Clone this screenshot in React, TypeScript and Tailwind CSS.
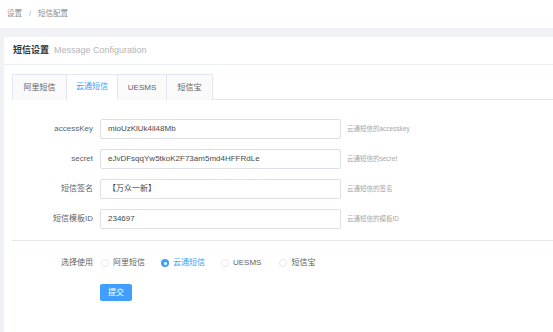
import React from "react";

const fields = [
  { label: "accessKey", value: "mioUzKlUk4il48Mb", hint: "云通短信的accesskey" },
  { label: "secret", value: "eJvDFsqqYw5tkoK2F73am5md4HFFRdLe", hint: "云通短信的secret" },
  { label: "短信签名", value: "【万众一新】", hint: "云通短信的签名" },
  { label: "短信模板ID", value: "234697", hint: "云通短信的模板ID" },
];

const tabs = [
  { name: "阿里短信", w: "w-[55px]" },
  { name: "云通短信", w: "w-[51px]", active: true },
  { name: "UESMS", w: "w-[49px]" },
  { name: "短信宝", w: "w-[46px]" },
];

const radios = [
  { name: "阿里短信", gap: "mr-[16px]" },
  { name: "云通短信", gap: "mr-[16px]", checked: true },
  { name: "UESMS", gap: "mr-[18px]" },
  { name: "短信宝", gap: "" },
];

export default function App() {
  return (
    <div
      className="w-[553px] h-[332px] overflow-hidden bg-[#f0f2f5] flex flex-col"
      style={{ fontFamily: '"Liberation Sans", "Noto Sans CJK SC", sans-serif' }}
    >
      {/* breadcrumb */}
      <div className="h-[28px] shrink-0 bg-white flex items-center pl-[7px] text-[7.5px] text-[#8c8c8c]">
        <span>设置</span>
        <span className="mx-[7px] text-[#aaa]">/</span>
        <span>短信配置</span>
      </div>

      <div className="ml-[4px] mt-[9px] flex-1 bg-white">
        {/* card header */}
        <div className="h-[28px] border-b border-[#ebeef5] flex items-center pl-[9px]">
          <span className="text-[9px] font-bold text-[#303133]">短信设置</span>
          <span className="ml-[5px] text-[9px] text-[#b4b4b4]">Message Configuration</span>
        </div>

        {/* tabs */}
        <div className="pl-[8px] pt-[9px]">
          <div className="flex border-b border-[#e4e7ed] h-[26px]">
            {tabs.map((t, i) => (
              <div
                key={t.name}
                className={
                  t.w +
                  " h-[26px] flex items-center justify-center text-[8px] border-t border-r border-[#e4e7ed] " +
                  (i === 0 ? "border-l " : "") +
                  (t.active ? "bg-white text-[#409eff] border-b border-b-white" : "bg-[#fafafa] text-[#606266]")
                }
              >
                {t.name}
              </div>
            ))}
          </div>
        </div>

        {/* form fields */}
        <div className="flex flex-col gap-[10px] mt-[19px]">
          {fields.map((f) => (
            <div key={f.label} className="flex items-center h-[20px]">
              <div className="w-[89px] text-right text-[8px] text-[#606266]">{f.label}</div>
              <div className="ml-[7px] w-[241px] h-[20px] border border-[#dcdfe6] rounded-[2px] flex items-center pl-[7px] text-[8px] text-[#4a4a4a]">
                {f.value}
              </div>
              <div className="ml-[6px] text-[6.5px] text-[#a8a8a8]">{f.hint}</div>
            </div>
          ))}
        </div>

        <div className="ml-[8px] mt-[11px] border-t border-[#e4e7ed]" />

        {/* radio row */}
        <div className="flex items-center h-[20px] mt-[12px]">
          <div className="w-[89px] text-right text-[8px] text-[#606266]">选择使用</div>
          <div className="ml-[8px] flex items-center">
            {radios.map((r) => (
              <div key={r.name} className={"flex items-center " + r.gap}>
                <span
                  className={
                    "w-[8px] h-[8px] rounded-full flex items-center justify-center " +
                    (r.checked ? "bg-[#409eff]" : "border border-[#e4e7ed] bg-white")
                  }
                >
                  {r.checked && <span className="w-[3px] h-[3px] rounded-full bg-white" />}
                </span>
                <span className={"ml-[4px] text-[8px] " + (r.checked ? "text-[#409eff]" : "text-[#606266]")}>
                  {r.name}
                </span>
              </div>
            ))}
          </div>
        </div>

        {/* submit */}
        <div className="ml-[96px] mt-[11px]">
          <button className="w-[32px] h-[17px] rounded-[2px] bg-[#409eff] text-white text-[8px] flex items-center justify-center">
            提交
          </button>
        </div>
      </div>
    </div>
  );
}
